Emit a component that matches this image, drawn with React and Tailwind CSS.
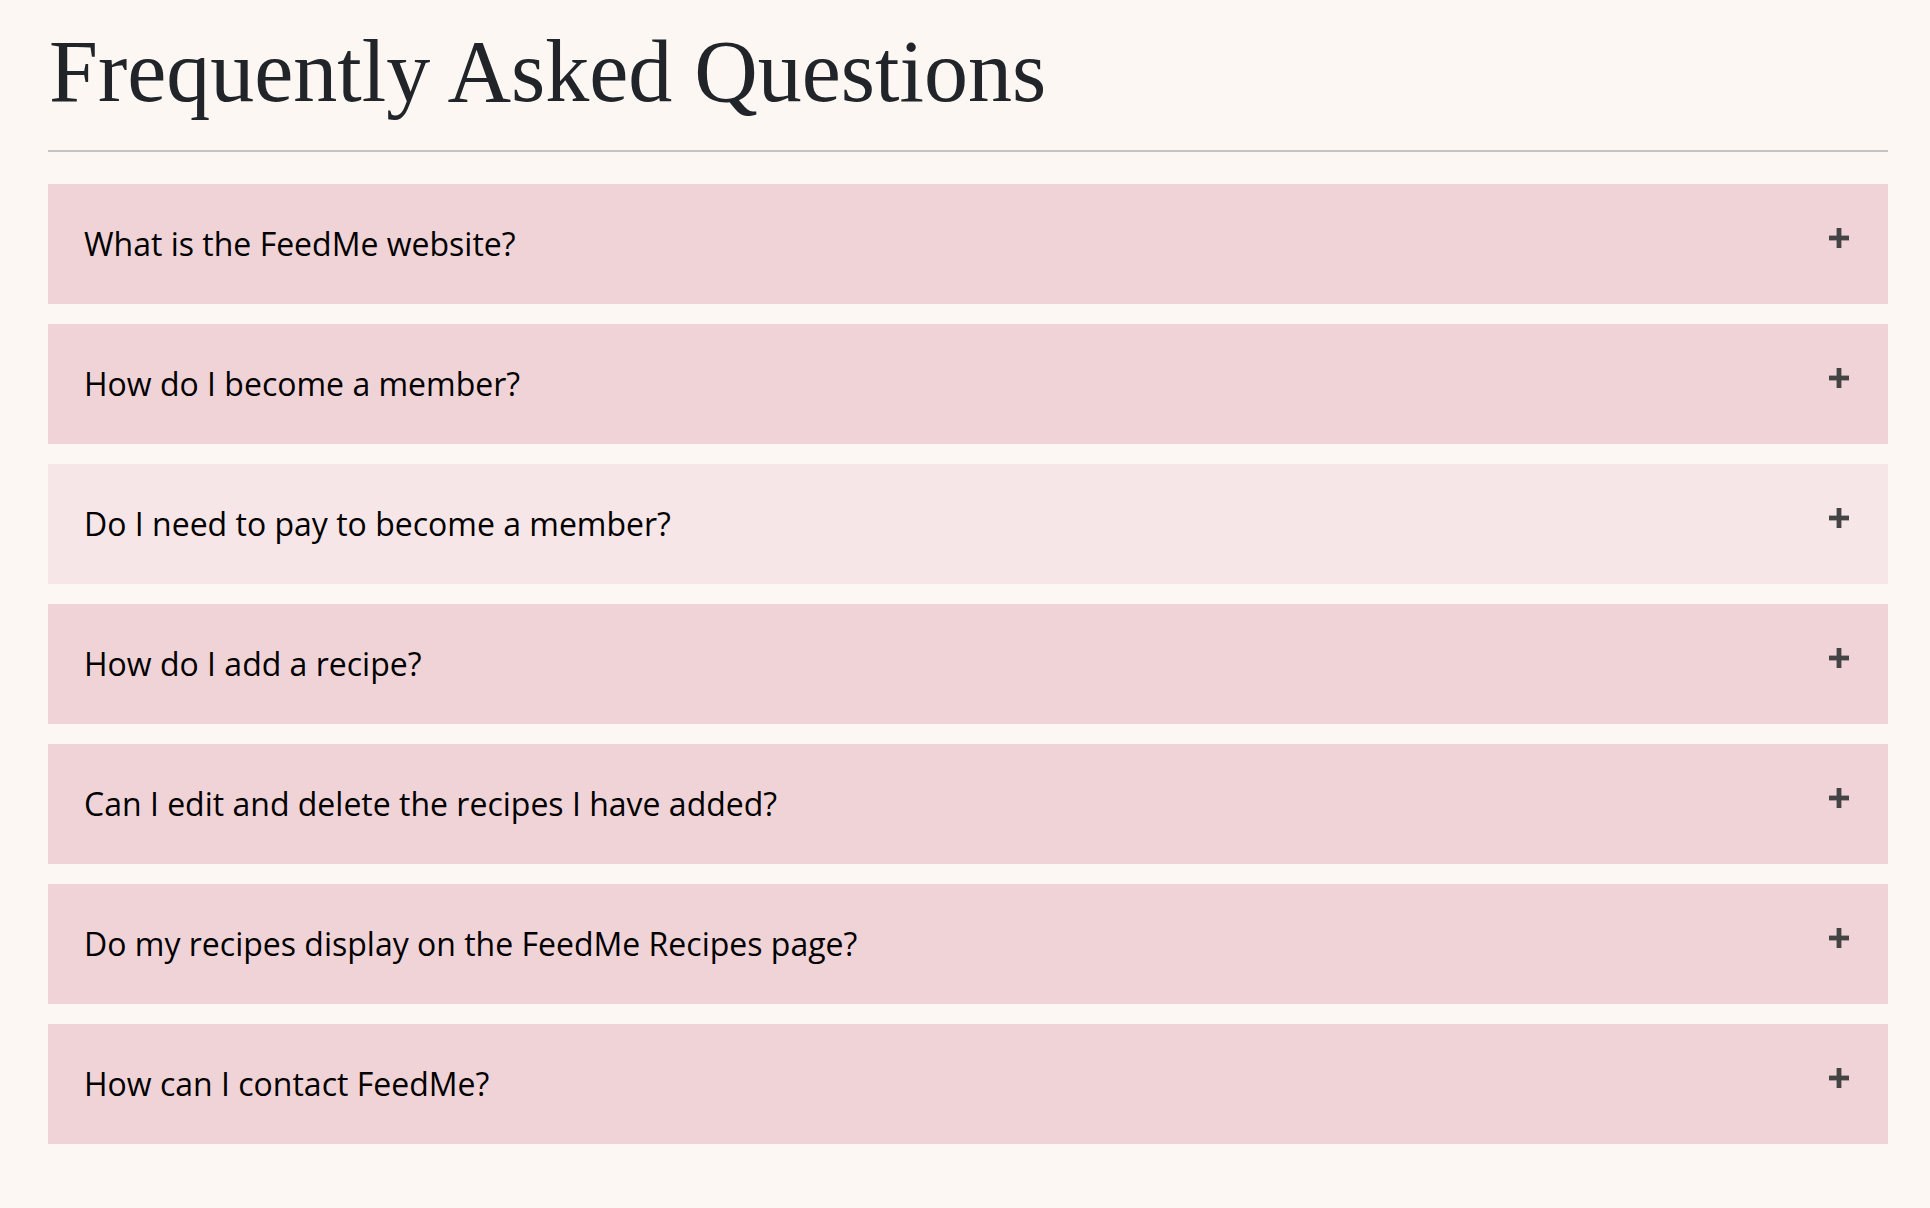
import React from "react";

const questions = [
  "What is the FeedMe website?",
  "How do I become a member?",
  "Do I need to pay to become a member?",
  "How do I add a recipe?",
  "Can I edit and delete the recipes I have added?",
  "Do my recipes display on the FeedMe Recipes page?",
  "How can I contact FeedMe?",
];

function Plus() {
  return (
    <svg width="20" height="20" viewBox="0 0 20 20" className="shrink-0">
      <rect x="7.6" y="0" width="4.8" height="20" fill="#444444" />
      <rect x="0" y="7.6" width="20" height="4.8" fill="#444444" />
    </svg>
  );
}

export default function App() {
  return (
    <div className="min-h-[1208px] w-full bg-[#fcf7f3]">
      <div className="ml-[48px] w-[1840px] pt-[17px]">
        <h1
          className="text-[88px] leading-[110px] text-[#212529] pl-[1px]"
          style={{ fontFamily: '"Liberation Serif", "DejaVu Serif", serif' }}
        >
          Frequently Asked Questions
        </h1>
        <div className="mt-[23px] h-[2px] bg-[#c6c4c2]" />
        <div className="mt-[32px] flex flex-col gap-[20px]">
          {questions.map((q, i) => (
            <div
              key={q}
              className={`flex h-[120px] justify-between ${
                i === 2 ? "bg-[#f7e6e7]" : "bg-[#f0d3d7]"
              }`}
            >
              <div
                className="flex items-center pl-[36px] text-[32px] text-black"
                style={{ fontFamily: '"Open Sans", sans-serif' }}
              >
                {q}
              </div>
              <div className="mt-[44px] mr-[39px]">
                <Plus />
              </div>
            </div>
          ))}
        </div>
      </div>
    </div>
  );
}
